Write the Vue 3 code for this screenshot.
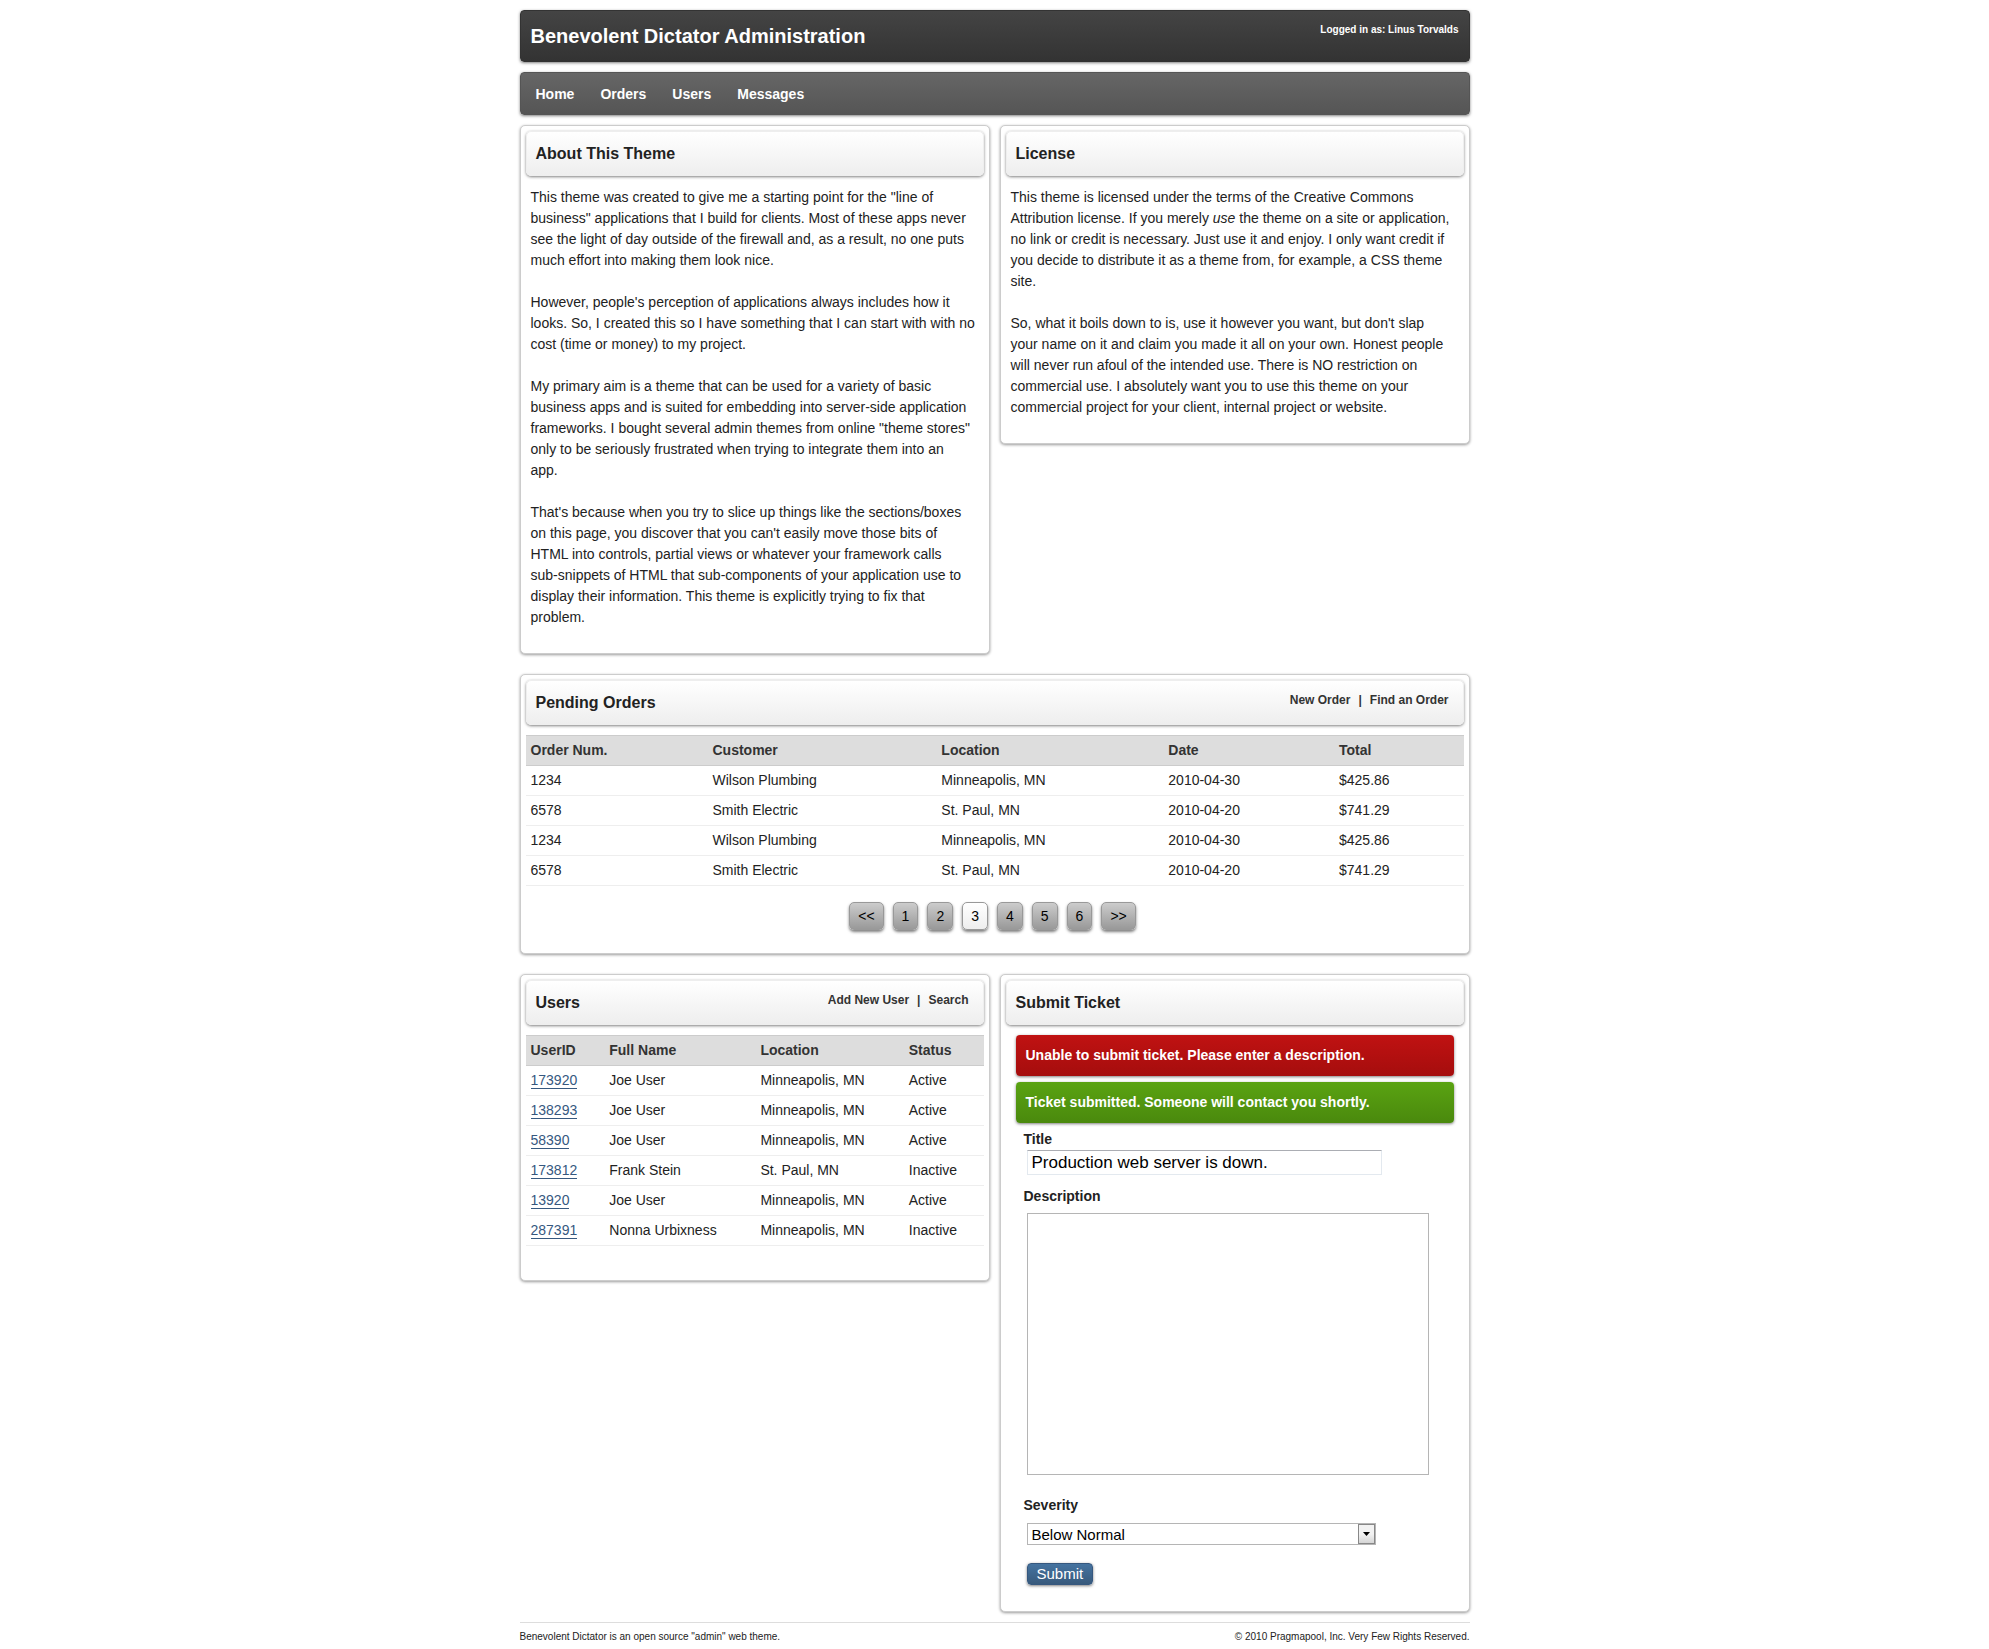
<script setup>
import { ref } from 'vue'

const nav = ['Home', 'Orders', 'Users', 'Messages']

const orders = [
  { num: '1234', customer: 'Wilson Plumbing', location: 'Minneapolis, MN', date: '2010-04-30', total: '$425.86' },
  { num: '6578', customer: 'Smith Electric', location: 'St. Paul, MN', date: '2010-04-20', total: '$741.29' },
  { num: '1234', customer: 'Wilson Plumbing', location: 'Minneapolis, MN', date: '2010-04-30', total: '$425.86' },
  { num: '6578', customer: 'Smith Electric', location: 'St. Paul, MN', date: '2010-04-20', total: '$741.29' },
]

const users = [
  { id: '173920', name: 'Joe User', location: 'Minneapolis, MN', status: 'Active' },
  { id: '138293', name: 'Joe User', location: 'Minneapolis, MN', status: 'Active' },
  { id: '58390', name: 'Joe User', location: 'Minneapolis, MN', status: 'Active' },
  { id: '173812', name: 'Frank Stein', location: 'St. Paul, MN', status: 'Inactive' },
  { id: '13920', name: 'Joe User', location: 'Minneapolis, MN', status: 'Active' },
  { id: '287391', name: 'Nonna Urbixness', location: 'Minneapolis, MN', status: 'Inactive' },
]

const pages = ['<<', '1', '2', '3', '4', '5', '6', '>>']
const currentPage = ref('3')

const title = ref('Production web server is down.')
const description = ref('')
const severity = ref('Below Normal')
const severities = ['Low', 'Below Normal', 'Normal', 'High']
</script>

<template>
  <div class="page">
    <header class="banner">
      <h1>Benevolent Dictator Administration</h1>
      <p class="login">Logged in as: Linus Torvalds</p>
    </header>

    <nav class="menu">
      <a v-for="item in nav" :key="item" href="#">{{ item }}</a>
    </nav>

    <main class="content">
      <div class="columns">
        <section class="panel">
          <div class="panel-head"><h2>About This Theme</h2></div>
          <div class="prose">
            <p>This theme was created to give me a starting point for the "line of business" applications that I build for clients. Most of these apps never see the light of day outside of the firewall and, as a result, no one puts much effort into making them look nice.</p>
            <p>However, people's perception of applications always includes how it looks. So, I created this so I have something that I can start with with no cost (time or money) to my project.</p>
            <p>My primary aim is a theme that can be used for a variety of basic business apps and is suited for embedding into server-side application frameworks. I bought several admin themes from online "theme stores" only to be seriously frustrated when trying to integrate them into an<br>app.</p>
            <p>That's because when you try to slice up things like the sections/boxes on this page, you discover that you can't easily move those bits of HTML into controls, partial views or whatever your framework calls <span class="whole">sub-snippets</span> of HTML that sub-components of your application use to display their information. This theme is explicitly trying to fix that problem.</p>
          </div>
        </section>

        <section class="panel">
          <div class="panel-head"><h2>License</h2></div>
          <div class="prose license">
            <p>This theme is licensed under the terms of the Creative Commons Attribution license. If you merely <em>use</em> the theme on a site or application, no link or credit is necessary. Just use it and enjoy. I only want credit if you decide to distribute it as a theme from, for example, a CSS theme site.</p>
            <p>So, what it boils down to is, use it however you want, but don't slap<br>your name on it and claim you made it all on your own. Honest people<br>will never run afoul of the intended use. There is NO restriction on commercial use. I absolutely want you to use this theme on your commercial project for your client, internal project or website.</p>
          </div>
        </section>
      </div>

      <section class="panel">
        <div class="panel-head">
          <h2>Pending Orders</h2>
          <div class="actions"><a href="#">New Order</a><span>|</span><a href="#">Find an Order</a></div>
        </div>
        <table class="orders">
          <thead>
            <tr><th>Order Num.</th><th>Customer</th><th>Location</th><th>Date</th><th>Total</th></tr>
          </thead>
          <tbody>
            <tr v-for="(o, i) in orders" :key="i">
              <td>{{ o.num }}</td><td>{{ o.customer }}</td><td>{{ o.location }}</td><td>{{ o.date }}</td><td>{{ o.total }}</td>
            </tr>
          </tbody>
        </table>
        <div class="pager">
          <button
            v-for="p in pages"
            :key="p"
            type="button"
            :class="{ current: p === currentPage }"
            @click="currentPage = p"
          >{{ p }}</button>
        </div>
      </section>

      <div class="columns">
        <section class="panel users-panel">
          <div class="panel-head">
            <h2>Users</h2>
            <div class="actions"><a href="#">Add New User</a><span>|</span><a href="#">Search</a></div>
          </div>
          <table class="users">
            <thead>
              <tr><th>UserID</th><th>Full Name</th><th>Location</th><th>Status</th></tr>
            </thead>
            <tbody>
              <tr v-for="u in users" :key="u.id">
                <td><a href="#">{{ u.id }}</a></td><td>{{ u.name }}</td><td>{{ u.location }}</td><td>{{ u.status }}</td>
              </tr>
            </tbody>
          </table>
        </section>

        <section class="panel">
          <div class="panel-head"><h2>Submit Ticket</h2></div>
          <div class="ticket">
            <p class="alert error">Unable to submit ticket. Please enter a description.</p>
            <p class="alert success">Ticket submitted. Someone will contact you shortly.</p>
            <form @submit.prevent>
              <label for="title">Title</label>
              <input id="title" v-model="title" type="text">
              <label for="description">Description</label>
              <textarea id="description" v-model="description"></textarea>
              <label for="severity">Severity</label>
              <div class="select">
                <select id="severity" v-model="severity">
                  <option v-for="s in severities" :key="s">{{ s }}</option>
                </select>
                <span class="arrow" aria-hidden="true">
                  <svg width="7" height="4" viewBox="0 0 7 4"><path d="M0 0H7L3.5 4Z" /></svg>
                </span>
              </div>
              <button class="submit" type="submit">Submit</button>
            </form>
          </div>
        </section>
      </div>
    </main>

    <footer class="footer">
      <p>Benevolent Dictator is an open source "admin" web theme.</p>
      <p>© 2010 Pragmapool, Inc. Very Few Rights Reserved.</p>
    </footer>
  </div>
</template>

<style>
body {
  margin: 0;
  background: #fff;
}
</style>

<style scoped>
.page {
  max-width: 950px;
  margin: 0 auto;
  padding: 10px 0;
  color: #222;
  font: 14px/21px "Liberation Sans", Arial, sans-serif;
}

h1, h2, p {
  margin: 0;
}

a {
  color: inherit;
  text-decoration: none;
}

button, input, select, textarea {
  margin: 0;
  font-family: inherit;
}

.banner, .menu, .alert {
  border-radius: 4px;
  color: #fff;
  box-shadow: 0 1px 3px rgba(0, 0, 0, 0.5);
}

.banner {
  display: flex;
  justify-content: space-between;
  min-height: 52px;
  box-sizing: border-box;
  padding: 10px;
  border: 1px solid #333;
  background: linear-gradient(#444, #333);
}

.banner h1 {
  font-size: 20px;
  line-height: 30px;
}

.login {
  font-size: 10px;
  font-weight: bold;
  line-height: 18px;
}

.menu {
  display: flex;
  gap: 26px;
  margin: 10px 0;
  padding: 11px 15px 9px;
  border: 1px solid #555;
  background: linear-gradient(#666, #555);
  font-weight: bold;
}

.content {
  display: flex;
  flex-direction: column;
  gap: 20px;
}

.columns {
  display: grid;
  grid-template-columns: 1fr 1fr;
  align-items: start;
  gap: 10px;
}

.panel {
  padding: 5px;
  border: 1px solid #ccc;
  border-radius: 5px;
  background: #fff;
  box-shadow: 0 1px 3px rgba(0, 0, 0, 0.4);
}

.panel-head {
  display: flex;
  justify-content: space-between;
  padding: 7px 14px 6px 9px;
  border: 1px solid #eee;
  border-radius: 5px;
  background: linear-gradient(#fff, #eee);
  box-shadow: 0 1px 3px rgba(0, 0, 0, 0.5);
}

.panel-head h2 {
  font-size: 16px;
  line-height: 30px;
}

.actions {
  display: flex;
  gap: 8px;
  color: #333;
  font-size: 12px;
  font-weight: bold;
  line-height: 24px;
}

.prose {
  display: grid;
  gap: 21px;
  padding: 11px 5px 20px;
}

.whole {
  white-space: nowrap;
}

table {
  width: 100%;
  margin-top: 10px;
  border-collapse: collapse;
  table-layout: fixed;
}

th, td {
  box-sizing: border-box;
  height: 30px;
  padding: 0 5px;
  border-bottom: 1px solid #eee;
  text-align: left;
}

th {
  border-top: 1px solid #ccc;
  border-bottom-color: #ccc;
  background: #ddd;
  color: #333;
}

.orders th:nth-child(1) { width: 19.4%; }
.orders th:nth-child(2) { width: 24.4%; }
.orders th:nth-child(3) { width: 24.2%; }
.orders th:nth-child(4) { width: 18.2%; }

.users th:nth-child(1) { width: 17.2%; }
.users th:nth-child(2) { width: 33%; }
.users th:nth-child(3) { width: 32.4%; }

.users td a {
  border-bottom: 1px solid #36587f;
  color: #36587f;
}

.users-panel {
  padding-bottom: 34px;
}

.pager {
  display: flex;
  justify-content: center;
  gap: 9px;
  padding: 16px 4px 18px 0;
}

.pager button {
  height: 28px;
  padding: 0 8px;
  border: 1px solid #999;
  border-radius: 5px;
  background: linear-gradient(#ccc, #999);
  box-shadow: 0 2px 3px rgba(0, 0, 0, 0.5);
  color: #000;
  font-size: 14px;
}

.pager .current {
  background: linear-gradient(#fff, #eee);
}

.ticket {
  padding: 10px;
}

.alert {
  margin-bottom: 6px;
  padding: 10px;
  font-weight: bold;
}

.error {
  background: linear-gradient(#c01212, #a50d0d);
}

.success {
  background: linear-gradient(#5aa312, #4a890d);
}

form {
  display: flex;
  flex-direction: column;
  align-items: flex-start;
  padding: 0 8px 11px;
}

label {
  font-weight: bold;
}

input, textarea, .select, .submit {
  max-width: 100%;
  margin-left: 3px;
  box-sizing: border-box;
}

input {
  width: 355px;
  height: 25px;
  margin-bottom: 11px;
  padding: 0 4px;
  border: 1px solid #e3e9ef;
  border-top-color: #abadb3;
  font-size: 17px;
}

textarea {
  width: 402px;
  height: 262px;
  margin-top: 6px;
  margin-bottom: 20px;
  border: 1px solid #b5b5b5;
  font-size: 15px;
  resize: none;
}

.select {
  position: relative;
  width: 349px;
  margin-top: 7px;
  margin-bottom: 18px;
}

select {
  display: block;
  width: 100%;
  height: 22px;
  padding: 0 20px 0 4px;
  border: 1px solid #b5b5b5;
  border-radius: 0;
  appearance: none;
  background: #fff;
  color: #000;
  font-size: 15px;
}

.arrow {
  position: absolute;
  top: 1px;
  right: 1px;
  bottom: 1px;
  display: grid;
  place-items: center;
  width: 15px;
  border: 1px solid #888;
  background: linear-gradient(#f2f2f2 50%, #d5d5d5);
  pointer-events: none;
}

.submit {
  height: 22px;
  padding: 0 9px;
  border: 1px solid #36587f;
  border-radius: 4px;
  background: linear-gradient(#4573a0, #385a7c);
  box-shadow: 0 1px 3px rgba(0, 0, 0, 0.5);
  color: #fff;
  font-size: 15px;
  line-height: 20px;
}

.footer {
  display: flex;
  justify-content: space-between;
  margin-top: 10px;
  padding-top: 3px;
  border-top: 1px solid #ddd;
  font-size: 10px;
}
</style>
